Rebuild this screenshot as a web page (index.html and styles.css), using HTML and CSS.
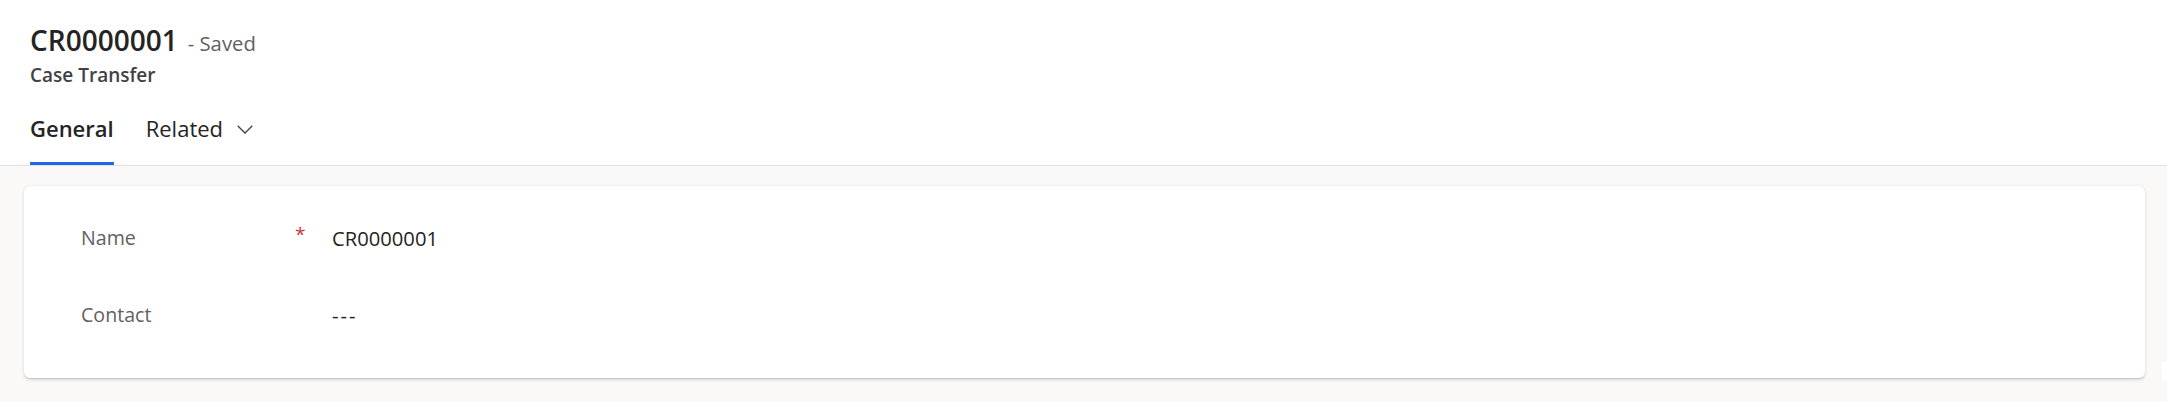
FILE: index.html
```html
<!DOCTYPE html>
<html lang="en">
<head>
<meta charset="utf-8">
<title>CR0000001 - Saved</title>
<link rel="stylesheet" href="styles.css">
</head>
<body>
<header class="record-header">
  <div class="title-row">
    <h1 class="record-title">CR0000001</h1>
    <span class="save-state">- Saved</span>
  </div>
  <div class="entity-name">Case Transfer</div>
  <nav class="tabs">
    <div class="tab tab-active">General</div>
    <div class="tab tab-related">Related
      <svg class="chevron" width="16" height="9" viewBox="0 0 16 9" aria-hidden="true"><path d="M0.7 0.7 L8 8 L15.3 0.7" fill="none" stroke="#424242" stroke-width="1.3"/></svg>
    </div>
  </nav>
</header>
<main class="content">
  <section class="card">
    <div class="field-row">
      <div class="field-label">Name</div>
      <div class="field-req">*</div>
      <div class="field-value">CR0000001</div>
    </div>
    <div class="field-row">
      <div class="field-label">Contact</div>
      <div class="field-req"></div>
      <div class="field-value field-empty">---</div>
    </div>
  </section>
  <div class="scroll-stub"></div>
</main>
</body>
</html>
```
FILE: styles.css
```css
html, body {
  margin: 0;
  padding: 0;
}
body {
  background: #faf9f8;
  font-family: "Open Sans", "Noto Sans", sans-serif;
  color: #242424;
  height: 402px;
  overflow: hidden;
}
.record-header {
  background: #ffffff;
  padding: 22px 0 0 30px;
  border-bottom: 1px solid #e0e0e0;
}
.title-row {
  display: flex;
  align-items: baseline;
  gap: 10px;
  height: 36px;
}
.record-title {
  margin: 0;
  font-size: 28px;
  line-height: 36px;
  font-weight: 600;
  color: #242424;
}
.save-state {
  font-size: 20.3px;
  color: #616161;
}
.entity-name {
  margin-top: 4px;
  font-size: 19px;
  line-height: 26px;
  font-weight: 600;
  color: #424242;
}
.tabs {
  display: flex;
  gap: 32px;
  margin-top: 24px;
}
.tab {
  font-size: 22px;
  line-height: 32px;
  padding: 0 0 18px 0;
  border-bottom: 3px solid transparent;
  display: flex;
  align-items: center;
  gap: 14px;
}
.tab-active {
  font-weight: 600;
  border-bottom-color: #2266e3;
}
.chevron {
  display: block;
  margin-top: 2px;
}
.content {
  display: flex;
  padding: 20px 0 0 24px;
  gap: 17px;
}
.card {
  flex: 0 0 2121px;
  box-sizing: border-box;
  height: 192px;
  background: #ffffff;
  border-radius: 6px;
  box-shadow: 0 1.6px 3.6px rgba(0, 0, 0, 0.13), 0 0.3px 0.9px rgba(0, 0, 0, 0.11);
  padding: 38px 0 0 57px;
}
.field-row {
  display: flex;
  height: 77px;
  line-height: 28px;
}
.field-label {
  width: 214px;
  font-size: 19.6px;
  color: #616161;
}
.field-req {
  width: 37px;
  color: #d13438;
  font-size: 19px;
  line-height: 20px;
}
.field-value {
  font-size: 20.2px;
  color: #242424;
}
.field-empty {
  letter-spacing: 2px;
}
.scroll-stub {
  width: 5px;
  height: 19px;
  margin-top: 176px;
  background: #ffffff;
}
```
